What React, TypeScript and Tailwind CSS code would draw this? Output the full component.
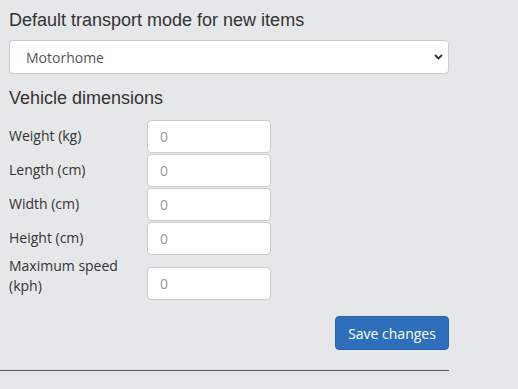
import { useState } from "react";

type Field = { label: string; tall?: boolean };

const fields: Field[] = [
  { label: "Weight (kg)" },
  { label: "Length (cm)" },
  { label: "Width (cm)" },
  { label: "Height (cm)" },
  { label: "Maximum speed (kph)", tall: true },
];

function Chevron() {
  return (
    <svg width="9" height="6" viewBox="0 0 9 6" className="pointer-events-none absolute right-[6px] top-[14px]">
      <path d="M1 1l3.5 3.5L8 1" fill="none" stroke="#333" strokeWidth="1.8" />
    </svg>
  );
}

export default function App() {
  const [mode, setMode] = useState("Motorhome");

  return (
    <div className="min-h-[389px] w-[518px] bg-[#e6e7e9] font-['Open_Sans',sans-serif] text-[14px] text-[#333]">
      <div className="w-[449px] pl-[9px] pt-[10px]">
        <h3 className="h-[20px] font-['Liberation_Sans',Arial,sans-serif] text-[18px] leading-[20px] text-[#333]">
          Default transport mode for new items
        </h3>

        <div className="relative mt-[10px]">
          <select
            value={mode}
            onChange={(e) => setMode(e.target.value)}
            className="h-[34px] w-full appearance-none rounded-[4px] border border-[#ccc] bg-white pl-[16px] text-[14px] text-[#555] outline-none"
          >
            <option>Motorhome</option>
            <option>Car</option>
            <option>Truck</option>
          </select>
          <Chevron />
        </div>

        <h4 className="mt-[14px] h-[20px] font-['Liberation_Sans',Arial,sans-serif] text-[18px] leading-[20px] text-[#333]">
          Vehicle dimensions
        </h4>

        <div className="mt-[12px] flex flex-col gap-px">
          {fields.map((f) => (
            <div key={f.label} className={f.tall ? "flex items-start" : "flex items-center"}>
              <label className={f.tall ? "w-[138px] pr-[20px] leading-[20px]" : "-mt-px w-[138px] leading-[20px]"}>
                {f.label}
              </label>
              <input
                placeholder="0"
                className={
                  "h-[33px] w-[124px] rounded-[4px] border border-[#ccc] bg-white px-[12px] text-[14px] text-[#555] outline-none placeholder:text-[#999]" +
                  (f.tall ? " mt-[11px]" : "")
                }
              />
            </div>
          ))}
        </div>

        <div className="mt-[16px] flex justify-end">
          <button className="h-[34px] w-[114px] rounded-[4px] border border-[#2a66ab] bg-[#2e6fbb] text-[14px] text-white">
            Save changes
          </button>
        </div>
      </div>

      <hr className="mt-[20px] w-[449px] border-0 border-t border-[#555]" />
    </div>
  );
}
